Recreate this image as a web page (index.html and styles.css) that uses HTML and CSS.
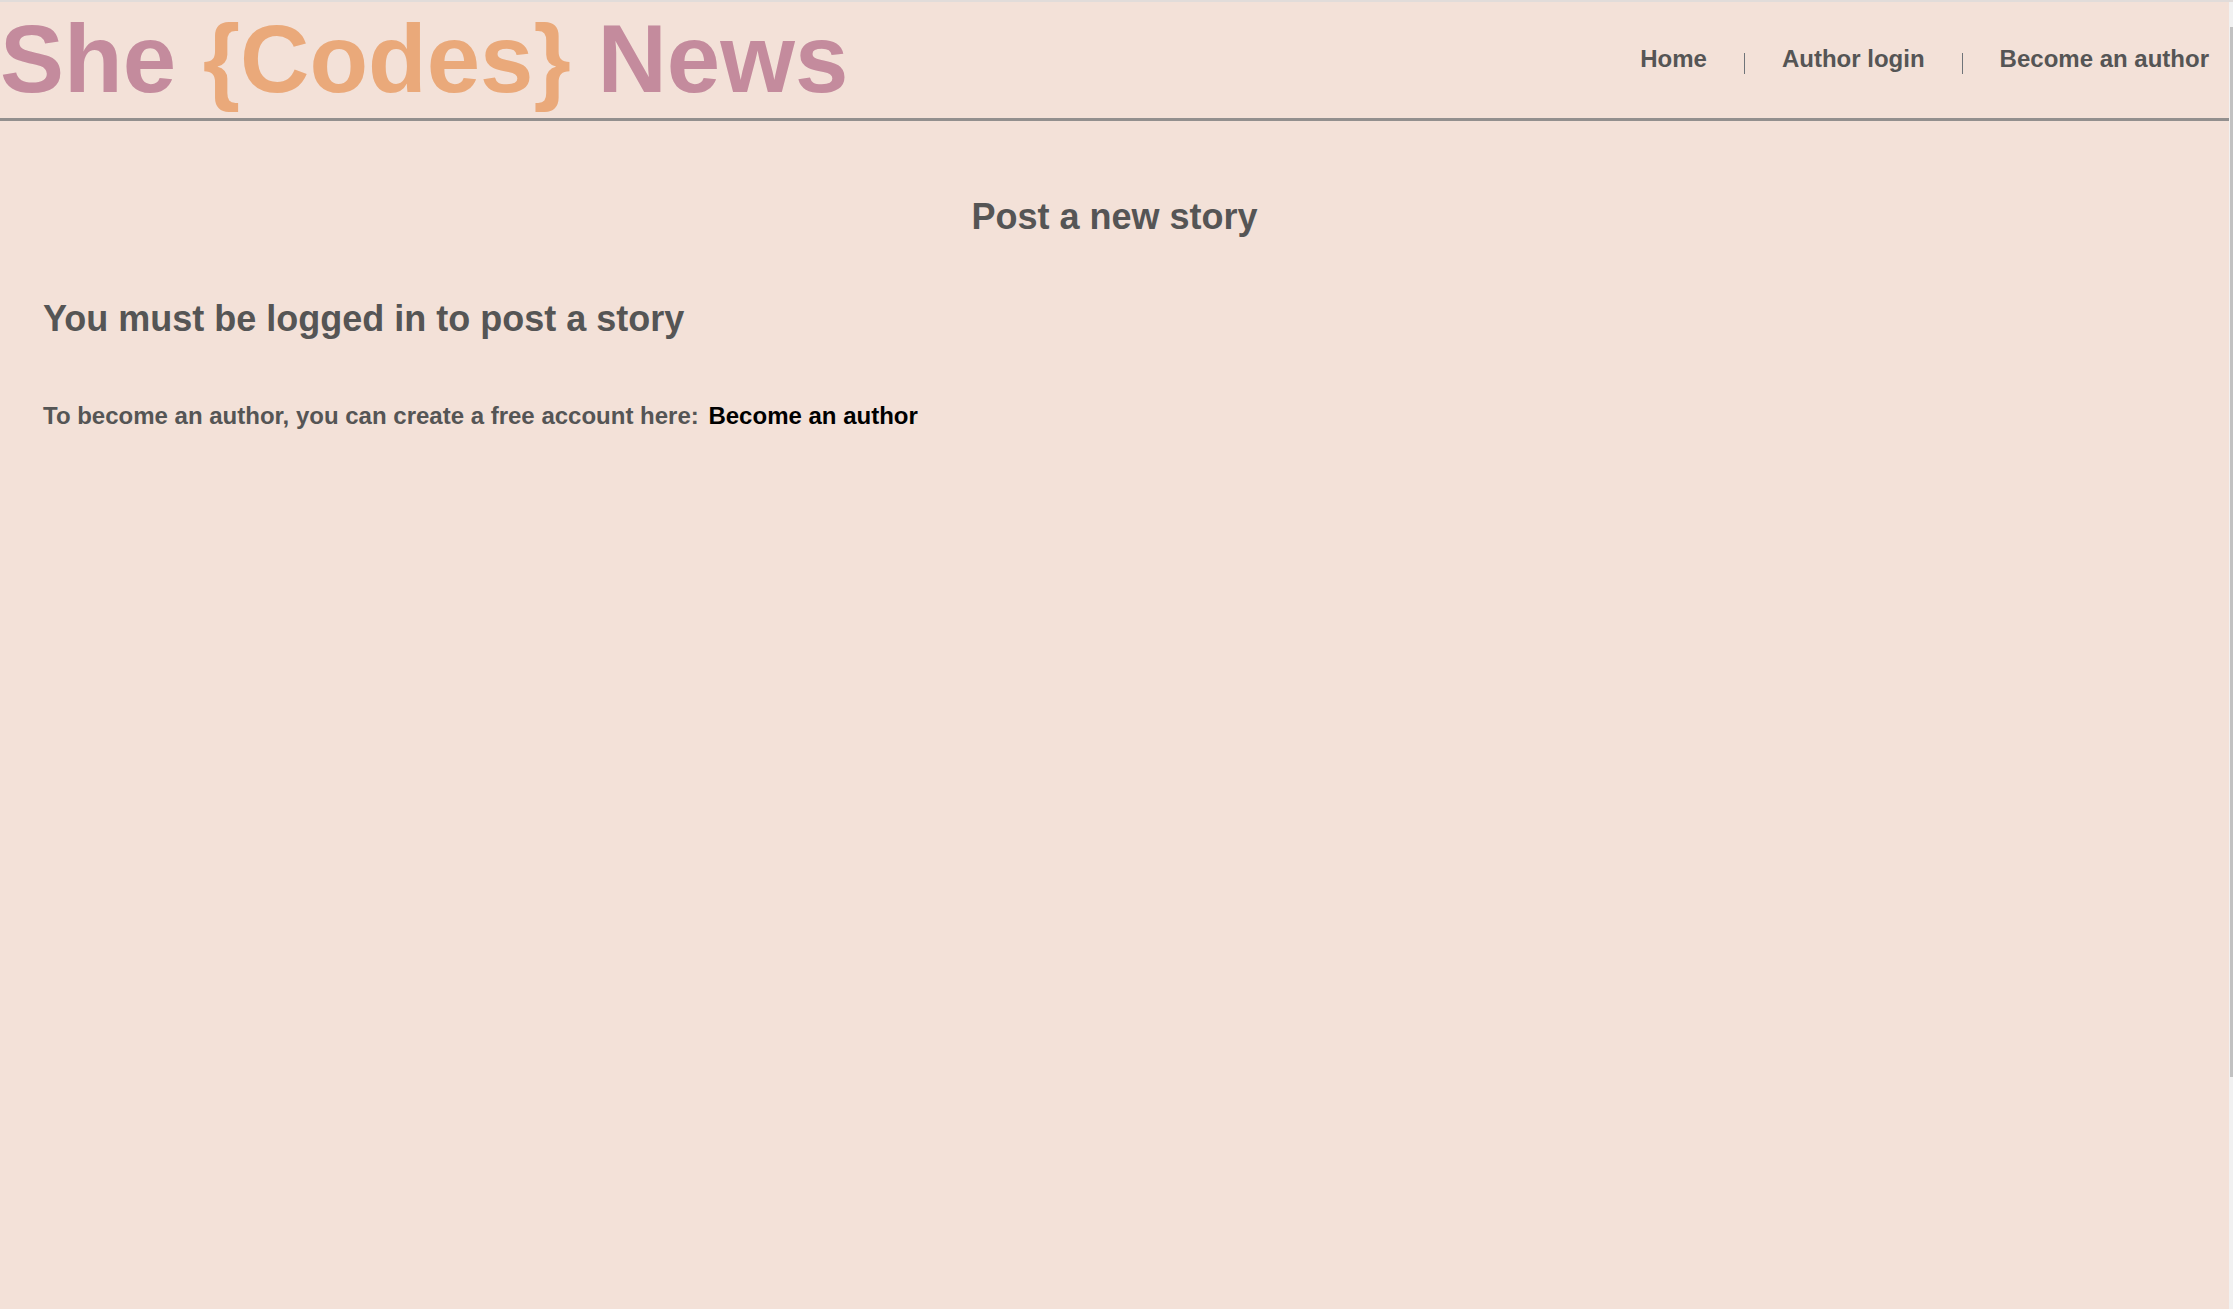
FILE: index.html
```html
<!DOCTYPE html>
<html lang="en">
<head>
<meta charset="utf-8">
<title>She Codes News</title>
<link rel="stylesheet" href="styles.css">
</head>
<body>
<div class="window">
  <div class="page">
    <header class="site-header">
      <h1 class="logo"><span class="logo-pink">She </span><span class="logo-orange">{Codes}</span><span class="logo-pink"> News</span></h1>
      <nav class="nav">
        <a class="nav-link" href="#">Home</a>
        <span class="nav-sep"></span>
        <a class="nav-link" href="#">Author login</a>
        <span class="nav-sep"></span>
        <a class="nav-link" href="#">Become an author</a>
      </nav>
    </header>
    <main class="content">
      <h2 class="page-title">Post a new story</h2>
      <h2 class="notice">You must be logged in to post a story</h2>
      <p class="hint">To become an author, you can create a free account here: <a class="hint-link" href="#">Become an author</a></p>
    </main>
  </div>
  <div class="scrollbar"><div class="scroll-thumb"></div></div>
</div>
</body>
</html>
```

FILE: styles.css
```css
html, body {
  margin: 0;
  padding: 0;
}

body {
  background: #f3e1d8;
  font-family: "Liberation Sans", Arial, sans-serif;
  font-weight: bold;
  color: #555555;
  border-top: 2px solid #e1dcda;
}

.window {
  display: flex;
  min-height: 1307px;
}

.page {
  flex: 1;
  min-width: 0;
}

.scrollbar {
  width: 4px;
  background: #f1f1f1;
  display: flex;
  flex-direction: column;
}

.scroll-thumb {
  margin-top: 25px;
  height: 1050px;
  margin-left: 1px;
  background: #c1c1c1;
}

.site-header {
  display: flex;
  justify-content: space-between;
  align-items: center;
  padding: 2px 1px 4px 0;
  border-bottom: 3px solid #928f8e;
}

.logo {
  margin: 0;
  font-size: 96px;
  line-height: 110px;
  font-weight: bold;
  white-space: nowrap;
}

.logo-pink {
  color: #c48b9d;
}

.logo-orange {
  color: #eaa97a;
}

.nav {
  display: flex;
  align-items: center;
}

.nav-link {
  font-size: 24px;
  color: #555555;
  text-decoration: none;
  padding: 0 19px;
}

.nav-sep {
  display: block;
  width: 1px;
  height: 21px;
  margin: 9px 18px 0;
  background: #6f7479;
}

.content {
  padding: 75px 43px 0;
}

.page-title {
  margin: 0 0 60px;
  font-size: 36px;
  text-align: center;
}

.notice {
  margin: 0 0 62px;
  font-size: 36px;
}

.hint {
  margin: 0;
  font-size: 24px;
}

.hint-link {
  margin-left: 3px;
  color: #000000;
  text-decoration: none;
}
```
